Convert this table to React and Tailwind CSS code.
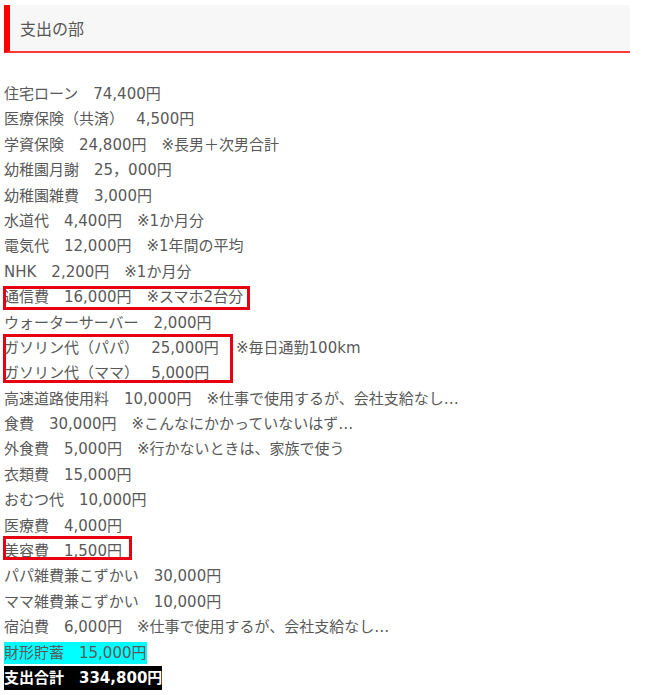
import React from "react";

const Line = ({ children, className = "" }) => (
  <div className={"h-[25.4px] leading-[25.4px] whitespace-nowrap " + className}>{children}</div>
);

export default function App() {
  return (
    <div
      className="w-[650px] h-[695px] bg-white overflow-hidden pt-[5px]"
      style={{ fontFamily: '"DejaVu Sans", "Noto Sans CJK JP", sans-serif' }}
    >
      <div className="ml-[4px] w-[626px] h-[48px] bg-[#f7f7f7] border-l-[6px] border-l-[#ff0000] border-b-2 border-b-[#ff3a3a] flex items-center pl-[10px] text-[16px] text-[#555555]">
        <span style={{ fontFamily: '"Noto Sans CJK JP", sans-serif' }}>支出の部</span>
      </div>

      <div className="mt-[29px] text-[15px] text-[#595959] flex flex-col">
        <Line className="pl-[4px]">住宅ローン　74,400円</Line>
        <Line className="pl-[4px]">医療保険（共済）　 4,500円</Line>
        <Line className="pl-[4px]">学資保険　24,800円　※長男＋次男合計</Line>
        <Line className="pl-[4px]">幼稚園月謝　25，000円</Line>
        <Line className="pl-[4px]">幼稚園雑費　3,000円</Line>
        <Line className="pl-[4px]">水道代　4,400円　※1か月分</Line>
        <Line className="pl-[4px]">電気代　12,000円　※1年間の平均</Line>
        <Line className="pl-[4px]">NHK　2,200円　※1か月分</Line>

        <div className="ml-[3px] w-[247px] h-[24px] mt-[1px] mb-[0.4px] outline-3 outline-offset-[-3px] outline-[#e60012]">
          <Line className="-mt-[1px] pl-[1px]">通信費　16,000円　※スマホ2台分</Line>
        </div>

        <Line className="pl-[4px]">ウォーターサーバー　2,000円</Line>

        <div className="flex items-start h-[50.8px]">
          <div className="ml-[3px] w-[230px] h-[49px] mt-[-1.8px] shrink-0 outline-3 outline-offset-[-3px] outline-[#e60012]">
            <Line className="mt-[1.8px] pl-[1px]">ガソリン代（パパ）　 25,000円</Line>
            <Line className="pl-[1px]">ガソリン代（ママ）　 5,000円</Line>
          </div>
          <Line className="pl-[3px]">※毎日通勤100km</Line>
        </div>

        <Line className="pl-[4px]">高速道路使用料　10,000円　※仕事で使用するが、会社支給なし…</Line>
        <Line className="pl-[4px]">食費　30,000円　※こんなにかかっていないはず…</Line>
        <Line className="pl-[4px]">外食費　5,000円　※行かないときは、家族で使う</Line>
        <Line className="pl-[4px]">衣類費　15,000円</Line>
        <Line className="pl-[4px]">おむつ代　10,000円</Line>
        <Line className="pl-[4px]">医療費　4,000円</Line>

        <div className="ml-[3px] w-[129px] h-[24px] mt-[-3px] mb-[4.4px] outline-3 outline-offset-[-3px] outline-[#e60012]">
          <Line className="mt-[3px] pl-[1px]">美容費　1,500円</Line>
        </div>

        <Line className="pl-[4px]">パパ雑費兼こずかい　30,000円</Line>
        <Line className="pl-[4px]">ママ雑費兼こずかい　10,000円</Line>
        <Line className="pl-[4px]">宿泊費　6,000円　※仕事で使用するが、会社支給なし…</Line>
        <Line className="pl-[4px]">
          <span className="bg-[#00ffff] py-[2px]">財形貯蓄　15,000円</span>
        </Line>
        <Line className="pl-[4px]">
          <span className="bg-black text-white font-bold py-[3px]">支出合計　334,800円</span>
        </Line>
      </div>
    </div>
  );
}
